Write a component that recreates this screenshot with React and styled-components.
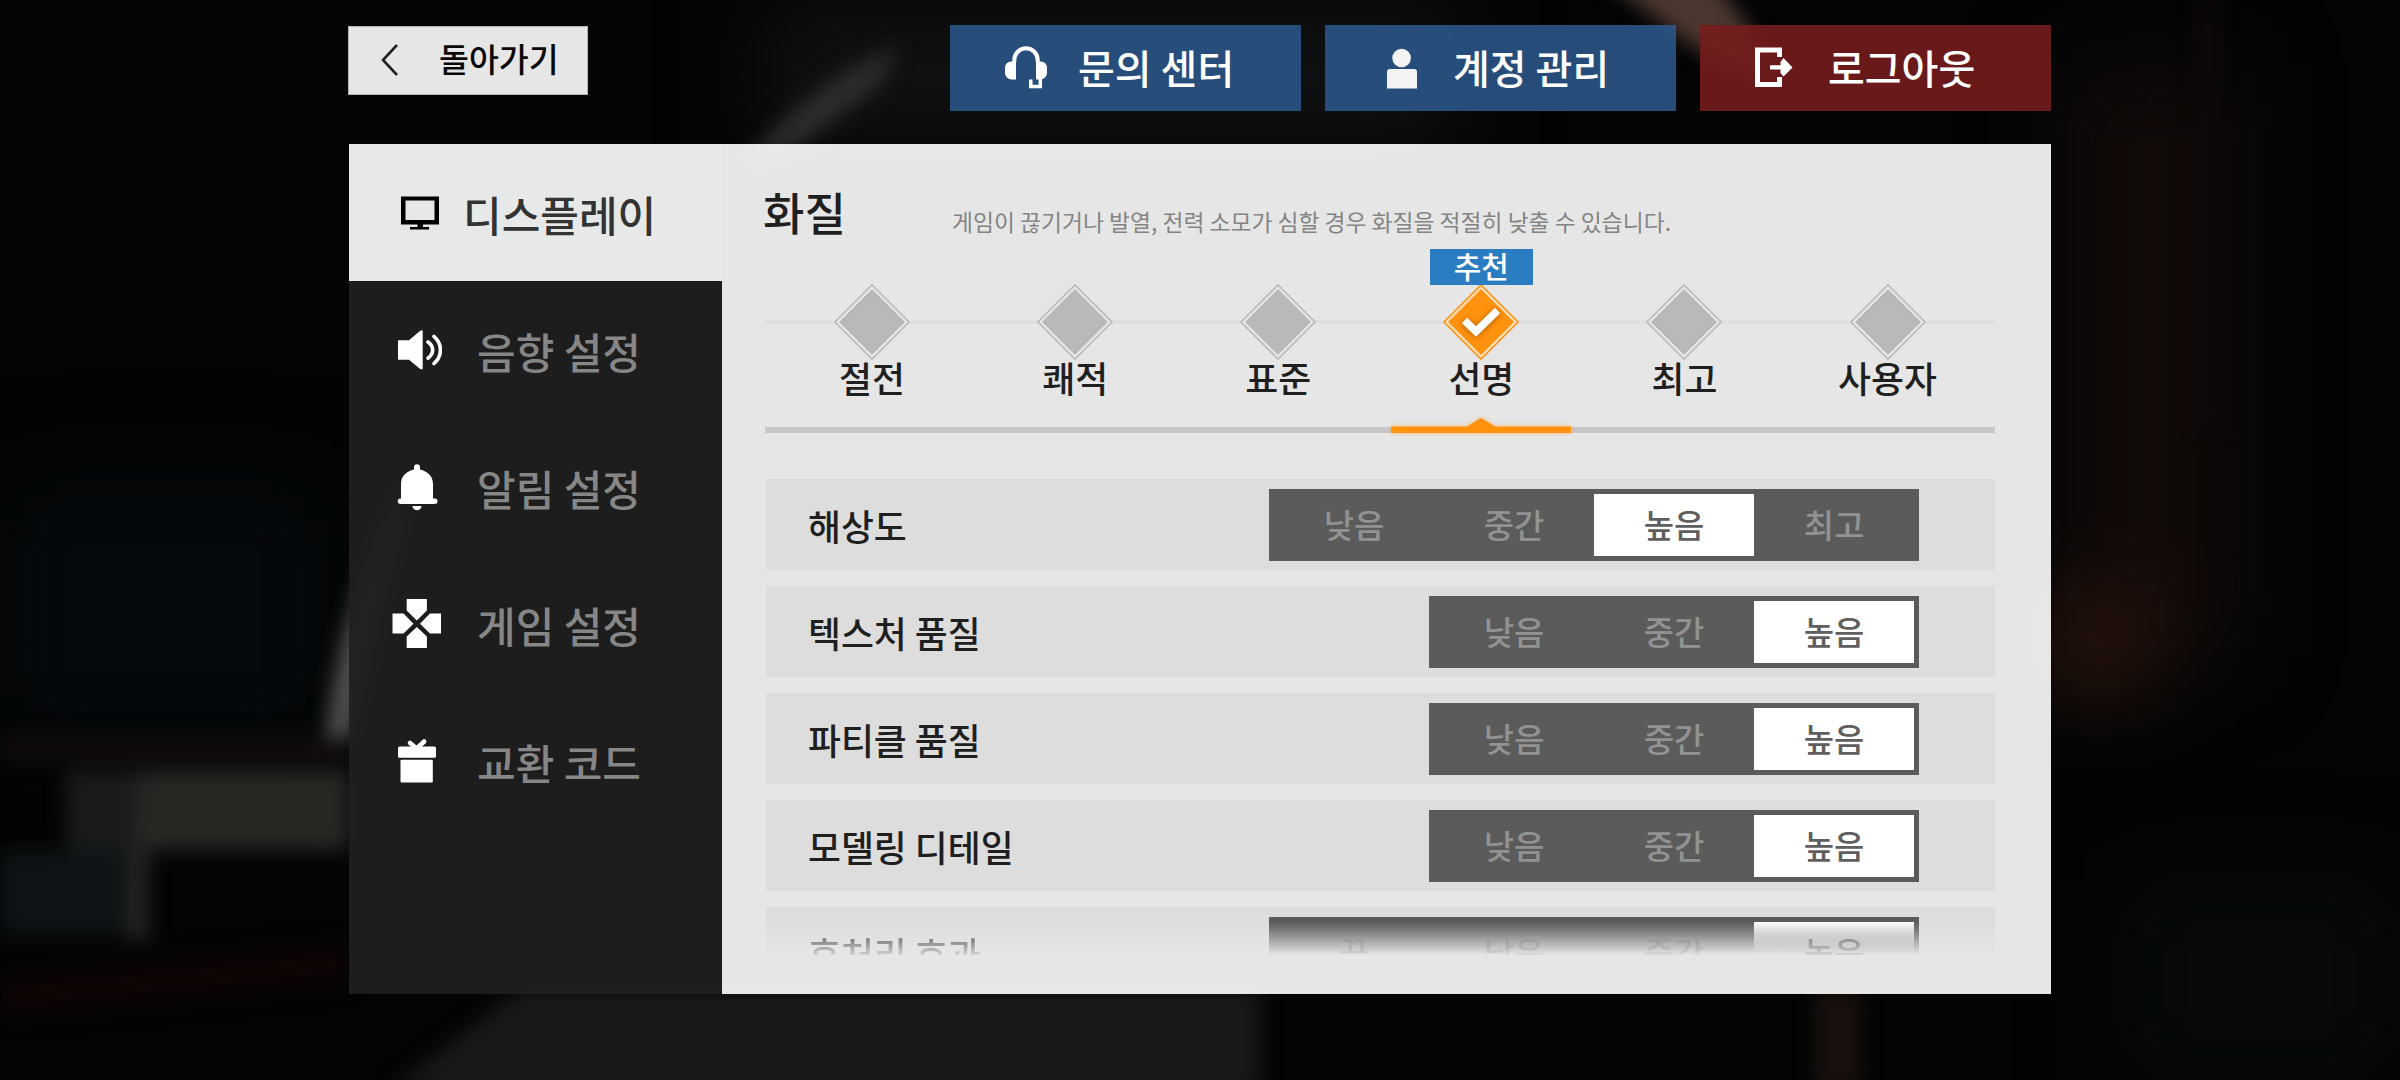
import React, { useState } from 'react';
import styled, { createGlobalStyle, css } from 'styled-components';

const tabs = [
    { id: 'display', label: '디스플레이', icon: MonitorIcon },
    { id: 'sound', label: '음향 설정', icon: SpeakerIcon },
    { id: 'notice', label: '알림 설정', icon: BellIcon },
    { id: 'game', label: '게임 설정', icon: PadIcon },
    { id: 'code', label: '교환 코드', icon: GiftIcon },
];

const presets = ['절전', '쾌적', '표준', '선명', '최고', '사용자'];

const options = [
    { label: '해상도', choices: ['낮음', '중간', '높음', '최고'], value: '높음' },
    { label: '텍스처 품질', choices: ['낮음', '중간', '높음'], value: '높음' },
    { label: '파티클 품질', choices: ['낮음', '중간', '높음'], value: '높음' },
    { label: '모델링 디테일', choices: ['낮음', '중간', '높음'], value: '높음' },
    { label: '후처리 효과', choices: ['끔', '낮음', '중간', '높음'], value: '높음', fading: true },
];

function MonitorIcon() {
    return (
        <svg width="50" height="50" viewBox="0 0 50 50">
            <path fill="#000" fillRule="evenodd" d="M9 8.500h38v28H9zM13.500 12.500V32h29V12.500z" />
            <path fill="#000" d="M25.500 36h5.500v3h6v2.500H18V39h7.500z" />
        </svg>
    );
}

function SpeakerIcon() {
    return (
        <svg width="50" height="50" viewBox="0 0 50 50">
            <path fill="#fff" d="M6 15.300h11L28.500 5.500h2.200v38.800h-2.200L17 34.700H6z" />
            <path d="M36 17c6.200 4.600 6.200 11.500 0 16.200M42 11.500c8.600 7.500 8.600 19.500 0 27" fill="none" stroke="#fff" strokeWidth="3.600" strokeLinecap="round" />
        </svg>
    );
}

function BellIcon() {
    return (
        <svg width="50" height="50" viewBox="0 0 50 50">
            <path fill="#fff" d="M22 7.500V5.200a3 3 0 0 1 6 0v2.300c7.500 1.800 13 6.500 13 14.500v14.500h1.800a2.700 2.700 0 0 1 0 5.500H8.500a2.700 2.700 0 0 1 0-5.500H9V22c0-8 5.500-12.700 13-14.500z" />
            <path fill="#fff" d="M20.500 44h9c0 2.500-2 4.200-4.500 4.200s-4.500-1.700-4.500-4.200z" />
        </svg>
    );
}

function PadIcon() {
    return (
        <svg width="50" height="50" viewBox="0 0 50 50">
            <g fill="#fff">
                <path d="M14.700 0h20.200v11.500L24.800 21.500 14.700 11.500z" />
                <path d="M14.700 49h20.200V37.500L24.800 28 14.700 37.500z" />
                <path d="M.5 14.500h11L21.500 24.700l-10 9.800h-11z" />
                <path d="M49 14.500H38L28 24.700l10 9.800h11z" />
            </g>
        </svg>
    );
}

function GiftIcon() {
    return (
        <svg width="50" height="50" viewBox="0 0 50 50">
            <rect x="6" y="10.500" width="38" height="11.300" rx="1.500" fill="#fff" />
            <rect x="8.500" y="23.800" width="32.300" height="22.700" rx="1" fill="#fff" />
            <path d="M18 7l6.700 5.500 7.500-7" fill="none" stroke="#fff" strokeWidth="4.500" strokeLinecap="round" />
        </svg>
    );
}

function HeadsetIcon() {
    return (
        <svg width="44" height="44" viewBox="0 0 44 44">
            <path d="M10.300 16v-2a11.700 11.700 0 0 1 23.400 0v2" fill="none" stroke="#fff" strokeWidth="4" />
            <path d="M12 15.500v18H7.500A6.500 6.500 0 0 1 1 27v-5.500a6 6 0 0 1 6-6zM32 15.500v18h4.500A6.500 6.500 0 0 0 43 27v-5.500a6 6 0 0 0-6-6z" fill="#fff" />
            <path d="M36.300 32v8.500h-9.500v-7" fill="none" stroke="#fff" strokeWidth="3.500" />
        </svg>
    );
}

function PersonIcon() {
    return (
        <svg width="44" height="44" viewBox="0 0 44 44">
            <circle cx="22.600" cy="12" r="9.300" fill="#f3f3f4" />
            <path d="M8 42.500V26a3 3 0 0 1 3-3h24a3 3 0 0 1 3 3v16.500z" fill="#f3f3f4" />
        </svg>
    );
}

function ExitIcon() {
    return (
        <svg width="44" height="44" viewBox="0 0 44 44">
            <path d="M25.500 11V4h-22v34.500h22V31" fill="none" stroke="#fff" strokeWidth="5" />
            <path d="M16 19.200h10.500v-3.400l3-3.800 9 9.500-9 9-3-3.600v-3.400H16z" fill="#fff" />
        </svg>
    );
}

function Diamond({ active }) {
    const color = active ? '#ff930f' : '#b9b9b9';
    return (
        <svg width="78" height="78" viewBox="0 0 78 78">
            <path d="M39 2l37 37-37 37L2 39z" fill={active ? '#fbe3c6' : '#e9e9e9'} stroke={color} strokeWidth="1.600" />
            <path d="M39 6l33 33-33 33L6 39z" fill={color} />
            {active && (
                <path d="M22.500 37.500l11.500 11 21.500-21" fill="none" stroke="#fff" strokeWidth="7.500" filter="drop-shadow(0 1px 3px #b35a00)" />
            )}
        </svg>
    );
}

// blurred hangar scene behind the panels
function Scene() {
    return (
        <Backdrop viewBox="0 0 2400 1080" preserveAspectRatio="none">
            <defs>
                <filter id="soft" x="-50%" y="-50%" width="200%" height="200%" colorInterpolationFilters="sRGB">
                    <feGaussianBlur stdDeviation="10" />
                </filter>
                <filter id="wide" x="-80%" y="-80%" width="260%" height="260%" colorInterpolationFilters="sRGB">
                    <feGaussianBlur stdDeviation="45" />
                </filter>
            </defs>
            <rect width="2400" height="1080" fill="#030404" />
            <g filter="url(#wide)">
                <path d="M760 0h700v150H760z" fill="#101112" />
                <path d="M2060 60h180v600h-180z" fill="#110a09" />
                <path d="M2040 600h110v90h-110z" fill="#32180f" />
                <path d="M0 480h330v260H0z" fill="#05090c" />
                <path d="M2120 880h280v200h-280z" fill="#07090b" />
            </g>
            <g filter="url(#soft)">
                <path d="M1590-30h120c20 40 50 60 60 105-60 0-110-60-180-105z" fill="#4c3630" />
                <path d="M350 740h-24c14-110 40-190 90-280z" fill="#555" />
                <path d="M740 170c40-55 90-95 160-125l-20 40-80 60z" fill="#2c2d2e" />
                <path d="M0 738h350v20H0z" fill="#140d0d" />
                <path d="M66 770h80v165l-40-5-40-60z" fill="#191b1c" />
                <path d="M140 770h210v80H148v90h-20z" fill="#292724" />
                <path d="M0 850h125v85H0z" fill="#0e1315" />
                <path d="M0 975l350-35v45L0 1020z" fill="#0d0404" />
                <path d="M520 990h740v100H390z" fill="#17191b" />
                <path d="M1815 990h45v100h-45z" fill="#1a100e" />
                <path d="M2200-20h16v450h-16z" fill="#10080a" />
            </g>
        </Backdrop>
    );
}

const App = () => {
    const [tab, setTab] = useState('display');
    const [preset, setPreset] = useState('선명');

    return (
        <Screen>
            <GlobalStyle />
            <Scene />
            <TopBar>
                <BackButton>
                    <svg width="20" height="36" viewBox="0 0 20 36">
                        <path d="M17 3L3 18l14 15" fill="none" stroke="#222" strokeWidth="2.600" />
                    </svg>
                    <span>돌아가기</span>
                </BackButton>
                <Actions>
                    <ActionButton><HeadsetIcon /><span>문의 센터</span></ActionButton>
                    <ActionButton><PersonIcon /><span>계정 관리</span></ActionButton>
                    <ActionButton $danger><ExitIcon /><span>로그아웃</span></ActionButton>
                </Actions>
            </TopBar>
            <Window>
                <Sidebar>
                    {tabs.map(({ id, label, icon: Icon }) => (
                        <Tab key={id} $active={id === tab} onClick={() => setTab(id)}>
                            <Icon />
                            <span>{label}</span>
                        </Tab>
                    ))}
                </Sidebar>
                <Content>
                    <Heading>
                        <Title>화질</Title>
                        <Hint>게임이 끊기거나 발열, 전력 소모가 심할 경우 화질을 적절히 낮출 수 있습니다.</Hint>
                    </Heading>
                    <Presets>
                        {presets.map(name => (
                            <Preset key={name} onClick={() => setPreset(name)}>
                                {name === '선명' && <Badge>추천</Badge>}
                                <Diamond active={name === preset} />
                                <PresetName>{name}</PresetName>
                                {name === preset && (
                                    <Marker width="196" height="28" viewBox="0 0 196 28">
                                        <path d="M8 12.500h76L98 4l14 8.500h76v6.500H8z" fill="#ff930f" />
                                    </Marker>
                                )}
                            </Preset>
                        ))}
                    </Presets>
                    <Options>
                        {options.map(({ label, choices, value, fading }) => (
                            <OptionRow key={label} $fading={fading}>
                                <OptionLabel $fading={fading}>{label}</OptionLabel>
                                <Segments $fading={fading}>
                                    {choices.map(choice => (
                                        <Segment key={choice} $active={choice === value} $fading={fading}>
                                            <span>{choice}</span>
                                        </Segment>
                                    ))}
                                </Segments>
                            </OptionRow>
                        ))}
                    </Options>
                </Content>
            </Window>
        </Screen>
    );
};

const GlobalStyle = createGlobalStyle`
  body {
    margin: 0;
    background: #030404;
    font-family: "Noto Sans CJK KR", sans-serif;
  }
  button {
    border: 0;
    padding: 0;
    font: inherit;
  }
  svg {
    display: block;
    flex: none;
  }
`;

const Screen = styled.div`
  position: relative;
  width: 2400px;
  height: 1080px;
  box-sizing: border-box;
  padding: 25px 349px 0;
  overflow: hidden;
`;

const Backdrop = styled.svg`
  position: absolute;
  top: 0;
  left: 0;
  width: 100%;
  height: 100%;
`;

const TopBar = styled.header`
  position: relative;
  display: flex;
  justify-content: space-between;
  align-items: flex-start;
  height: 119px;
`;

const BackButton = styled.button`
  display: flex;
  align-items: center;
  width: 240px;
  height: 69px;
  box-sizing: border-box;
  margin: 1px 0 0 -1px;
  padding: 0 0 1px 31px;
  border: 1px solid #b5b5b5;
  background: #e6e6e6;
  color: #080808;
  font-size: 32.500px;
  font-weight: 500;
  line-height: 1;
  span {
    margin: 0 0 3px 39px;
  }
`;

const Actions = styled.div`
  display: flex;
  gap: 24px;
`;

const ActionButton = styled.button`
  display: flex;
  align-items: center;
  width: 351px;
  height: 86px;
  padding-left: 54px;
  background: ${props => (props.$danger ? 'rgba(116, 28, 29, 0.9)' : 'rgba(42, 85, 134, 0.9)')};
  color: #fff;
  font-size: 40px;
  font-weight: 500;
  line-height: 1;
  span {
    margin: 0 0 3px 30px;
  }
`;

const Window = styled.main`
  position: relative;
  display: flex;
  width: 1702px;
  height: 850px;
`;

const Sidebar = styled.nav`
  display: flex;
  flex-direction: column;
  width: 373px;
  background: rgba(31, 31, 31, 0.93);
`;

const Tab = styled.button`
  display: flex;
  align-items: center;
  height: 137px;
  padding-left: 43px;
  background: ${props => (props.$active ? '#e7e9e8' : 'transparent')};
  color: ${props => (props.$active ? '#333' : '#868686')};
  font-size: 42px;
  font-weight: 500;
  line-height: 1;
  span {
    margin: 2px 0 0 ${props => (props.$active ? '21px' : '35px')};
  }
`;

const Content = styled.section`
  flex: 1;
  padding: 0 56px 0 43px;
  background: rgba(255, 255, 255, 0.9);
`;

const Heading = styled.div`
  display: flex;
  align-items: baseline;
  height: 139px;
  margin-left: -2px;
  padding-top: 35px;
  box-sizing: border-box;
`;

const Title = styled.h1`
  width: 189px;
  margin: 0;
  font-size: 45px;
  font-weight: 500;
  color: #1f1f1f;
`;

const Hint = styled.p`
  margin: 0;
  font-size: 22.800px;
  color: #848484;
`;

const Presets = styled.div`
  display: grid;
  grid-template-columns: repeat(6, 203.100px);
  height: 144px;
  padding-left: 5.500px;
  border-bottom: 6px solid #c6c6c6;
  background: linear-gradient(#e0e0e0, #e0e0e0) 0 37px / 100% 4px no-repeat;
`;

const Preset = styled.div`
  position: relative;
  display: flex;
  flex-direction: column;
  align-items: center;
`;

const Badge = styled.div`
  position: absolute;
  top: -34px;
  width: 103px;
  height: 36px;
  background: #2a7dc1;
  color: #fff;
  font-size: 30px;
  font-weight: 500;
  line-height: 33px;
  text-align: center;
`;

const PresetName = styled.div`
  margin-top: -2px;
  font-size: 35.800px;
  font-weight: 500;
  line-height: 36px;
  color: #1f1f1f;
`;

const Marker = styled.svg`
  position: absolute;
  bottom: -15px;
  filter: drop-shadow(0 0 2px rgba(255, 170, 60, 0.8));
`;

const Options = styled.div`
  display: flex;
  flex-direction: column;
  gap: 16px;
  height: 476px;
  margin: 46px 0 0 1px;
  overflow: hidden;
`;

const fade = (color, from) => css`
  background: linear-gradient(${color} ${from}px, transparent ${from + 33}px);
`;

const textFade = css`
  mask-image: linear-gradient(rgba(0, 0, 0, 0.6), transparent 24px);
`;

const OptionRow = styled.div`
  display: flex;
  flex: none;
  align-items: center;
  justify-content: space-between;
  height: 91px;
  box-sizing: border-box;
  padding: 0 76px 0 42px;
  background: rgba(0, 0, 0, 0.04);
  ${props => props.$fading && fade('rgba(0, 0, 0, 0.04)', 15)}
`;

const OptionLabel = styled.div`
  font-size: 35.800px;
  font-weight: 500;
  line-height: 36px;
  color: #1f1f1f;
  ${props => props.$fading && textFade}
`;

const Segments = styled.div`
  display: flex;
  padding: 5px;
  margin-top: 1px;
  background: #5b5b5b;
  ${props => props.$fading && fade('#5b5b5b', 5)}
`;

const Segment = styled.button`
  width: 160px;
  height: 62px;
  background: ${props => (props.$active ? '#fff' : 'transparent')};
  color: ${props => (props.$active ? '#5f5f5f' : '#929292')};
  font-size: 33px;
  font-weight: 500;
  line-height: 33px;
  ${props => props.$fading && props.$active && fade('#fff', 0)}
  span {
    display: block;
    margin-bottom: 2px;
    ${props => props.$fading && textFade}
  }
`;

export default App;
